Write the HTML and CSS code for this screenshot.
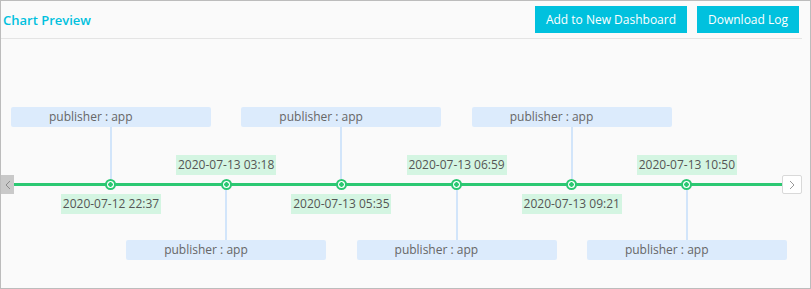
FILE: index.html
```html
<!DOCTYPE html>
<html lang="en">
<head>
  <meta charset="UTF-8" />
  <title>Chart Preview</title>
  <link rel="stylesheet" href="styles.css">
</head>
<body>

  <div class="panel">
    <div class="header">
      <h1 class="title">Chart Preview</h1>
      <div class="actions">
        <button class="btn">Add to New Dashboard</button>
        <button class="btn">Download Log</button>
      </div>
    </div>

    <!-- Timeline -->
    <div class="timeline">
      <button class="nav prev">
        <svg width="6" height="10" viewBox="0 0 6 10"><polyline points="5,1 1,5 5,9" /></svg>
      </button>

      <div class="chart">
        <div class="event up">
          <div class="tag">publisher : app</div>
          <div class="stem"></div>
          <div class="node"></div>
          <div class="date">2020-07-12 22:37</div>
        </div>
        <div class="event down">
          <div class="date">2020-07-13 03:18</div>
          <div class="node"></div>
          <div class="stem"></div>
          <div class="tag">publisher : app</div>
        </div>
        <div class="event up">
          <div class="tag">publisher : app</div>
          <div class="stem"></div>
          <div class="node"></div>
          <div class="date">2020-07-13 05:35</div>
        </div>
        <div class="event down">
          <div class="date">2020-07-13 06:59</div>
          <div class="node"></div>
          <div class="stem"></div>
          <div class="tag">publisher : app</div>
        </div>
        <div class="event up">
          <div class="tag">publisher : app</div>
          <div class="stem"></div>
          <div class="node"></div>
          <div class="date">2020-07-13 09:21</div>
        </div>
        <div class="event down">
          <div class="date">2020-07-13 10:50</div>
          <div class="node"></div>
          <div class="stem"></div>
          <div class="tag">publisher : app</div>
        </div>
      </div>

      <button class="nav next">
        <svg width="6" height="10" viewBox="0 0 6 10"><polyline points="1,1 5,5 1,9" /></svg>
      </button>
    </div>
  </div>

</body>
</html>
```

FILE: styles.css
```css
body {
  margin: 0;
  font-family: 'Open Sans', 'Noto Sans', sans-serif;
  font-size: 12px;
}

.panel {
  width: 811px;
  height: 289px;
  box-sizing: border-box;
  border: 1px solid #bcbcbc;
  background-color: #fafafa;
  overflow: hidden;
}

/* Barre du haut */
.header {
  display: flex;
  justify-content: space-between;
  align-items: center;
  height: 37px;
  margin-right: 8px;
  padding: 0 3px 0 2px;
  border-bottom: 1px solid #e4e4e4;
}

.title {
  margin: 0;
  font-size: 13px;
  font-weight: 600;
  color: #00c1de;
}

.actions {
  display: flex;
  gap: 10px;
}

.btn {
  height: 27px;
  padding: 0 11px;
  border: none;
  background-color: #00c1de;
  color: #fff;
  font-family: inherit;
  font-size: 12px;
}

/* Frise */
.timeline {
  display: flex;
  align-items: flex-start;
  margin-top: 68px;
  margin-right: 8px;
}

.nav {
  display: flex;
  align-items: center;
  justify-content: center;
  height: 19px;
  margin-top: 68px;
  padding: 0;
  box-sizing: border-box;
}

.nav svg polyline {
  fill: none;
  stroke-width: 1;
}

.prev {
  width: 13px;
  border: none;
  background-color: #c9c9c9;
}

.prev svg polyline {
  stroke: #8a8a8a;
}

.next {
  width: 20px;
  border: 1px solid #d9d9d9;
  border-radius: 2px;
  background-color: #fff;
}

.next svg polyline {
  stroke: #999;
}

.chart {
  flex: 1;
  display: grid;
  grid-template-columns: repeat(6, 115.2px);
  padding-left: 39.4px;
  background: linear-gradient(#2bc872, #2bc872) 0 76px / 100% 3px no-repeat;
}

.event {
  display: flex;
  flex-direction: column;
  align-items: center;
}

.tag {
  flex: none;
  width: 200px;
  height: 20px;
  box-sizing: border-box;
  padding-left: 38px;
  border-radius: 2px;
  background-color: #dcebfc;
  color: #666;
  line-height: 19px;
}

.stem {
  width: 2px;
  background-color: #d2e5fa;
}

.up .stem {
  height: 52px;
}

.down .stem {
  height: 50px;
}

.node {
  flex: none;
  width: 11px;
  height: 11px;
  box-sizing: border-box;
  border: 2px solid #2bc872;
  border-radius: 50%;
  background: radial-gradient(circle, #2bc872 0 2px, #fff 2.5px);
}

.date {
  flex: none;
  width: 100px;
  height: 20px;
  background-color: #d4f5e2;
  color: #555;
  line-height: 20px;
  text-align: center;
}

.up .date {
  margin-top: 4px;
}

.down .date {
  margin-top: 48px;
  margin-bottom: 4px;
}
```
